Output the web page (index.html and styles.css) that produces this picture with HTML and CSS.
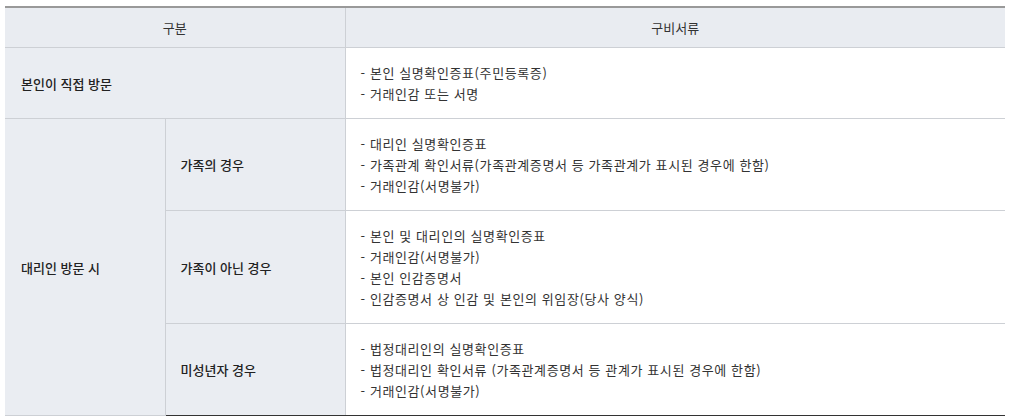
FILE: index.html
```html
<!DOCTYPE html>
<html lang="ko">
<head>
<meta charset="utf-8">
<link rel="stylesheet" href="styles.css">
</head>
<body>
<div class="wrap">
<table class="doc-table">
  <colgroup>
    <col class="c1"><col class="c2"><col class="c3">
  </colgroup>
  <thead>
    <tr>
      <th colspan="2">구분</th>
      <th>구비서류</th>
    </tr>
  </thead>
  <tbody>
    <tr>
      <th class="label" colspan="2">본인이 직접 방문</th>
      <td>- 본인 실명확인증표(주민등록증)<br>- 거래인감 또는 서명</td>
    </tr>
    <tr>
      <th class="label" rowspan="3">대리인 방문 시</th>
      <th class="label sub">가족의 경우</th>
      <td>- 대리인 실명확인증표<br>- 가족관계 확인서류(가족관계증명서 등 가족관계가 표시된 경우에 한함)<br>- 거래인감(서명불가)</td>
    </tr>
    <tr>
      <th class="label sub">가족이 아닌 경우</th>
      <td>- 본인 및 대리인의 실명확인증표<br>- 거래인감(서명불가)<br>- 본인 인감증명서<br>- 인감증명서 상 인감 및 본인의 위임장(당사 양식)</td>
    </tr>
    <tr>
      <th class="label sub">미성년자 경우</th>
      <td>- 법정대리인의 실명확인증표<br>- 법정대리인 확인서류 (가족관계증명서 등 관계가 표시된 경우에 한함)<br>- 거래인감(서명불가)</td>
    </tr>
  </tbody>
</table>
</div>
</body>
</html>
```

FILE: styles.css
```css
html, body {
  margin: 0;
  padding: 0;
  background: #ffffff;
}
body {
  font-family: "Noto Sans CJK KR", "Noto Sans", sans-serif;
  font-size: 13px;
  color: #333333;
}
.wrap {
  padding: 6px 6px 0 5px;
}
.doc-table {
  width: 1000px;
  border-collapse: collapse;
  table-layout: fixed;
  border-top: 2px solid #999999;
  border-bottom: 1px solid #333333;
}
.c1 { width: 160px; }
.c2 { width: 180px; }
.c3 { width: auto; }
.doc-table th,
.doc-table td {
  line-height: 21px;
  border: 1px solid #cdd0d5;
  text-align: left;
  vertical-align: middle;
}
.doc-table tr > :first-child { border-left: none; }
.doc-table tr > :last-child { border-right: none; }
.doc-table thead th {
  background: #e9ecf1;
  font-weight: 400;
  text-align: center;
  padding: 9px 15px;
  border-top: none;
  color: #333333;
}
.doc-table th.label {
  background: #eaedf2;
  font-weight: 500;
  padding: 14px 16px;
  color: #222222;
}
.doc-table th.label.sub {
  padding-left: 15px;
  border-left: 1px solid #cdd0d5;
}
.doc-table td {
  background: #ffffff;
  padding: 14px 15px;
  color: #333333;
  letter-spacing: 0.6px;
}
.doc-table tbody tr:last-child > * {
  border-bottom: 1px solid #333333;
}
```
